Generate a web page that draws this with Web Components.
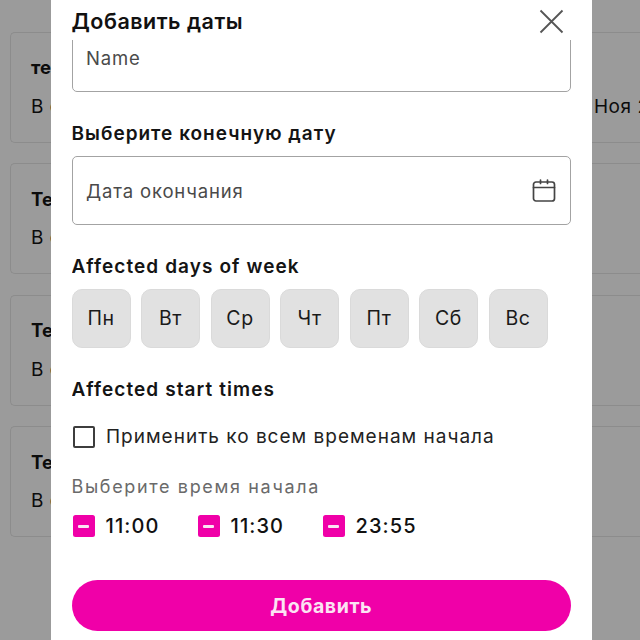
<!DOCTYPE html>
<html lang="ru"><head><meta charset="utf-8"><title>Добавить даты</title>
<style>
html,body{margin:0;height:640px;overflow:hidden}
body{background:#9b9b9b;font-family:Inter,"Liberation Sans",sans-serif;color:#111;position:relative}
</style></head><body>
<bg-list>
<bg-card title-text="те" sub="В с" date="Ноя 2"></bg-card>
<bg-card title-text="Те" sub="В с"></bg-card>
<bg-card title-text="Те" sub="В с"></bg-card>
<bg-card title-text="Те" sub="В с"></bg-card>
</bg-list>
<date-modal>
<text-field slot="fields" placeholder="Name"></text-field>
</date-modal>
<script>
function def(name, html, setup){
  customElements.define(name, class extends HTMLElement{
    connectedCallback(){
      if(this.shadowRoot) return;
      const r=this.attachShadow({mode:'open'});
      r.innerHTML=html;
      if(setup) setup(this,r);
    }
  });
}
def('bg-list',`<style>:host{display:flex;flex-direction:column;gap:20.5px;padding:31.5px 0 0 10px;width:640px;box-sizing:border-box}</style><slot></slot>`);
def('bg-card',`<style>
:host{display:flex;flex-direction:column;box-sizing:border-box;height:111px;border:1px solid #8c8c8c;border-right:0;border-radius:5px 0 0 5px;padding:24.5px 0 0 20px;gap:17.5px}
.t{font:700 18.5px/20px Inter,sans-serif;color:#0c0c0c}
.s{display:flex;font:400 19px/24px Inter,sans-serif;color:#0c0c0c;letter-spacing:.5px;white-space:nowrap}
.a{flex:none;width:563px}
</style><div class="t"></div><div class="s"><span class="a"></span><span class="d"></span></div>`,(h,r)=>{
  r.querySelector('.t').textContent=h.getAttribute('title-text');
  r.querySelector('.a').textContent=h.getAttribute('sub');
  r.querySelector('.d').textContent=h.getAttribute('date')||'';
});
def('text-field',`<style>
:host{display:flex;align-items:center;justify-content:space-between;box-sizing:border-box;border:1px solid #a3a3a3;border-radius:5px;padding:0 14px 0 13.5px;background:#fff;width:100%;height:69px;color:#4a4a4a;font:400 18.5px/24px Inter,sans-serif;letter-spacing:.85px;flex:none}
::slotted(svg){display:block}
</style><span class="p"></span><slot></slot>`,(h,r)=>{r.querySelector('.p').textContent=h.getAttribute('placeholder');});
def('day-chip',`<style>
:host{display:flex;align-items:center;justify-content:center;width:59px;height:59px;box-sizing:border-box;background:#e1e1e1;border:1px solid #dadada;border-radius:10px;padding-bottom:1px;font:400 19.5px/24px Inter,sans-serif;color:#1a1a1a;letter-spacing:.6px}
</style><slot></slot>`);
def('time-check',`<style>
:host{display:flex;align-items:center;gap:11px;width:125px;font:500 20px/24px Inter,sans-serif;color:#111;letter-spacing:1.1px}
.b{width:22px;height:22px;border-radius:2.5px;background:#f000a8;display:flex;align-items:center;justify-content:center}
.b i{display:block;width:11px;height:3px;background:#fbe4f3;border-radius:1px}
</style><span class="b"><i></i></span><slot></slot>`);
def('date-modal',`<style>
:host{position:absolute;left:51px;top:0;width:540.5px;height:640px;background:#fff;display:flex;flex-direction:column;box-sizing:border-box;padding:0 20.5px 0 20.5px;overflow:hidden}
.head{display:flex;justify-content:space-between;align-items:center;height:40px;flex:none;padding-top:2px;box-sizing:border-box}
h2{margin:0;font:600 21.5px/24px Inter,sans-serif;color:#111;letter-spacing:.5px}
.x{display:block;margin-right:7px;margin-top:1px}
.scroll{flex:1;overflow:hidden;display:flex;flex-direction:column}
.fields{display:flex;flex-direction:column;margin-top:-17px}
h3{margin:0;font:600 19px/24px Inter,sans-serif;color:#141414;letter-spacing:1px}
h3.lat{letter-spacing:1.08px}
.h1{margin-top:30px}.h2{margin-top:30px}.h3{margin-top:30px}
.f2{margin-top:10px}
.days{display:flex;gap:10.5px;margin-top:10px}
.all{display:flex;align-items:center;gap:11px;margin-top:23px;font:400 19px/24px Inter,sans-serif;color:#222;letter-spacing:1px;padding-left:1.5px}
.cb{width:18px;height:18px;border:2px solid #3d3d3d;border-radius:2px;flex:none}
.hint{margin-top:26px;font:400 18px/24px Inter,sans-serif;color:#6a6a6a;letter-spacing:1.65px}
.times{display:flex;margin-top:15px;padding-left:1px}
.btn{margin-top:42px;height:51px;width:100%;border:0;border-radius:26px;background:#f000a8;color:#fbe3f3;font:700 19.5px/24px Inter,sans-serif;letter-spacing:.6px;flex:none}
</style>
<div class="head"><h2>Добавить даты</h2>
<svg class="x" width="25" height="25" viewBox="0 0 25 25" fill="none" stroke="#555" stroke-width="1.8"><path d="M1.5 1.5 23.5 23.5M23.5 1.5 1.5 23.5"/></svg></div>
<div class="scroll"><div class="fields">
<slot name="fields"></slot>
<h3 class="h1">Выберите конечную дату</h3>
<text-field class="f2" placeholder="Дата окончания">
<svg width="24" height="24" viewBox="0 0 24 24" fill="none" stroke="#444" stroke-width="1.7" stroke-linecap="round"><rect x="1.5" y="3" width="21" height="19" rx="2.5"/><path d="M1.5 8.5H22.5M8.5 1V4.5M15.5 1V4.5"/></svg>
</text-field>
<h3 class="h2 lat">Affected days of week</h3>
<div class="days"><day-chip>Пн</day-chip><day-chip>Вт</day-chip><day-chip>Ср</day-chip><day-chip>Чт</day-chip><day-chip>Пт</day-chip><day-chip>Сб</day-chip><day-chip>Вс</day-chip></div>
<h3 class="h3 lat">Affected start times</h3>
<div class="all"><span class="cb"></span><span>Применить ко всем временам начала</span></div>
<div class="hint">Выберите время начала</div>
<div class="times"><time-check>11:00</time-check><time-check>11:30</time-check><time-check>23:55</time-check></div>
<button class="btn">Добавить</button>
</div></div>`);
</script>
</body></html>
